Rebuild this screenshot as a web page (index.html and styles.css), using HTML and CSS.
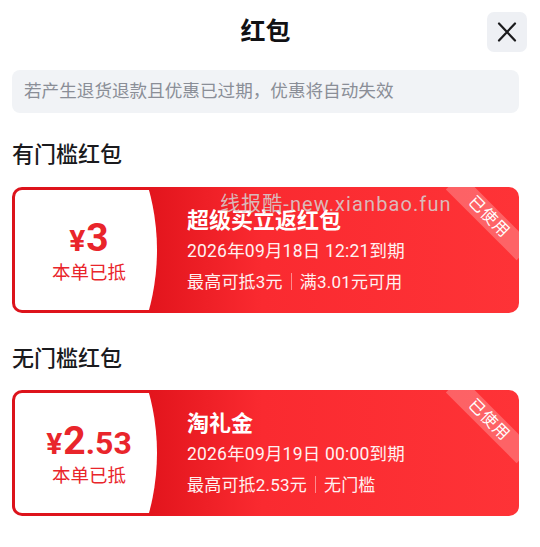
FILE: index.html
```html
<!DOCTYPE html>
<html lang="zh-CN">
<head>
<meta charset="utf-8">
<title>红包</title>
<link rel="stylesheet" href="styles.css">
</head>
<body>
<div class="page">
  <header class="header">
    <span></span>
    <h1 class="title">红包</h1>
    <button class="close" aria-label="关闭">
      <svg width="20" height="20" viewBox="0 0 20 20"><path d="M2 1.5 L18 18.5 M18 1.5 L2 18.5" stroke="#1b1b1d" stroke-width="2.2" stroke-linecap="round" fill="none"/></svg>
    </button>
  </header>

  <div class="notice">若产生退货退款且优惠已过期，优惠将自动失效</div>

  <section class="section">
    <h2 class="section-title">有门槛红包</h2>
    <div class="card">
      <div class="stub">
        <div class="amount"><span class="yen">¥</span><span class="int">3</span></div>
        <div class="stub-label">本单已抵</div>
      </div>
      <div class="info">
        <div class="info-title">超级买立返红包</div>
        <div class="info-date">2026年09月18日 12:21到期</div>
        <div class="info-rule"><span>最高可抵3元</span><i class="sep"></i><span>满3.01元可用</span></div>
      </div>
      <div class="ribbon">已使用</div>
      <div class="watermark">线报酷-new.xianbao.fun</div>
    </div>
  </section>

  <section class="section">
    <h2 class="section-title">无门槛红包</h2>
    <div class="card">
      <div class="stub">
        <div class="amount"><span class="yen">¥</span><span class="int">2</span><span class="dec">.53</span></div>
        <div class="stub-label">本单已抵</div>
      </div>
      <div class="info">
        <div class="info-title">淘礼金</div>
        <div class="info-date">2026年09月19日 00:00到期</div>
        <div class="info-rule"><span>最高可抵2.53元</span><i class="sep"></i><span>无门槛</span></div>
      </div>
      <div class="ribbon">已使用</div>
    </div>
  </section>
</div>
</body>
</html>
```

FILE: styles.css
```css
* { box-sizing: border-box; }

html, body {
  margin: 0;
  padding: 0;
  background: #ffffff;
}

body {
  font-family: Roboto, "Noto Sans CJK SC", "Noto Sans", sans-serif;
  color: #1c1c1e;
}

.page {
  width: 540px;
  padding: 12px 21px 0 12px;
}

.header {
  display: grid;
  grid-template-columns: 1fr auto 1fr;
  align-items: center;
  height: 40px;
}

.title {
  margin: 0;
  font-size: 25px;
  font-weight: 700;
  line-height: 40px;
  color: #111114;
}

.close {
  justify-self: end;
  margin-right: -8px;
  width: 40px;
  height: 40px;
  border: 0;
  border-radius: 7px;
  background: #eef0f4;
  display: flex;
  align-items: center;
  justify-content: center;
  padding: 0;
}

.notice {
  margin-top: 18px;
  height: 43px;
  line-height: 43px;
  padding-left: 12px;
  border-radius: 8px;
  background: #f1f3f6;
  color: #8a8e97;
  font-size: 17.6px;
}

.section {
  margin-top: 27px;
}

.section + .section {
  margin-top: 31px;
}

.section-title {
  margin: 0 0 17px;
  font-size: 22px;
  line-height: 30px;
  font-weight: 500;
  color: #1a1a1d;
}

.section + .section .section-title {
  margin-bottom: 16px;
}

.card {
  position: relative;
  display: flex;
  height: 126px;
  padding: 3px;
  border-radius: 10px;
  overflow: hidden;
  background: linear-gradient(90deg, #dc131b 0, #e3151d 140px, #fa2a30 250px, #fe3337 100%);
}

.stub {
  width: 142px;
  height: 120px;
  flex: none;
  background: #ffffff;
  border-radius: 7px;
  clip-path: circle(229px at -87px 50%);
  display: flex;
  flex-direction: column;
  align-items: center;
  justify-content: center;
  padding-left: 6px;
  padding-top: 2px;
  color: #e9252b;
}

.amount {
  display: flex;
  align-items: baseline;
  line-height: 40px;
  font-weight: 700;
}

.yen {
  font-size: 30px;
  margin-right: 1px;
}

.int {
  font-size: 39px;
}

.dec {
  font-size: 32px;
}

.stub-label {
  font-size: 18.5px;
  line-height: 22px;
  margin-top: 1px;
}

.info {
  flex: 1;
  padding-left: 30px;
  display: flex;
  flex-direction: column;
  justify-content: center;
  color: #ffffff;
}

.info-title {
  font-size: 22px;
  line-height: 30px;
  font-weight: 700;
}

.info-date {
  margin-top: 2px;
  font-size: 17.5px;
  line-height: 26px;
  letter-spacing: 0.2px;
  color: #fff1f1;
}

.info-rule {
  margin-top: 5px;
  display: flex;
  align-items: center;
  font-size: 17px;
  line-height: 26px;
  letter-spacing: 0.2px;
  color: #fff1f1;
}

.sep {
  display: block;
  width: 1px;
  height: 17px;
  margin: 0 8px;
  background: rgba(255, 255, 255, 0.45);
}

.ribbon {
  position: absolute;
  top: 19px;
  right: -20px;
  width: 100px;
  height: 22px;
  line-height: 22px;
  transform: rotate(45deg);
  background: rgba(255, 255, 255, 0.24);
  color: #ffffff;
  font-size: 16px;
  text-align: center;
  letter-spacing: 1px;
}

.watermark {
  position: absolute;
  top: 5px;
  left: 208px;
  font-size: 20px;
  line-height: 24px;
  letter-spacing: 1.1px;
  color: rgba(212, 212, 212, 0.85);
  white-space: nowrap;
}
```
